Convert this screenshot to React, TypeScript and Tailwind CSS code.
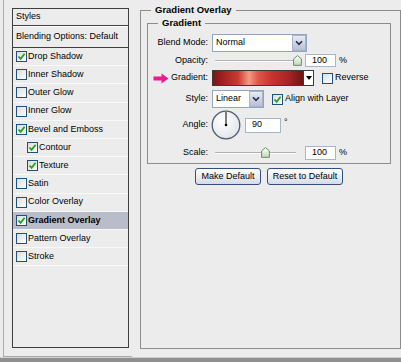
import React from 'react';

type Item = { label: string; checked: boolean; indent?: boolean; active?: boolean };

const items: Item[] = [
  { label: 'Drop Shadow', checked: true },
  { label: 'Inner Shadow', checked: false },
  { label: 'Outer Glow', checked: false },
  { label: 'Inner Glow', checked: false },
  { label: 'Bevel and Emboss', checked: true },
  { label: 'Contour', checked: true, indent: true },
  { label: 'Texture', checked: true, indent: true },
  { label: 'Satin', checked: false },
  { label: 'Color Overlay', checked: false },
  { label: 'Gradient Overlay', checked: true, active: true },
  { label: 'Pattern Overlay', checked: false },
  { label: 'Stroke', checked: false },
];

function Checkbox({ checked }: { checked: boolean }) {
  return (
    <span className="w-[11px] h-[11px] shrink-0 border border-[#1c5180] bg-gradient-to-br from-[#dcdcd6] to-white flex items-center justify-center">
      {checked && (
        <svg width="9" height="9" viewBox="0 0 9 9">
          <path d="M1.5 4.5 L3.6 6.8 L7.6 1.8" fill="none" stroke="#21a121" strokeWidth="1.8" />
        </svg>
      )}
    </span>
  );
}

function DropButton() {
  return (
    <span className="w-[14px] h-full shrink-0 bg-gradient-to-b from-[#e8ebf3] to-[#b7bfd2] border border-[#a9b3c8] flex items-center justify-center">
      <svg width="8" height="6" viewBox="0 0 8 6">
        <path d="M1 1.2 L4 4.3 L7 1.2" fill="none" stroke="#22304a" strokeWidth="1.6" />
      </svg>
    </span>
  );
}

function Thumb() {
  return (
    <svg width="9" height="11" viewBox="0 0 9 11">
      <defs>
        <linearGradient id="th" x1="0" y1="0" x2="0" y2="1">
          <stop offset="0" stopColor="#ffffff" />
          <stop offset="1" stopColor="#b9dcb2" />
        </linearGradient>
      </defs>
      <path d="M4.5 0.6 L8.4 4 L8.4 10.4 L0.6 10.4 L0.6 4 Z" fill="url(#th)" stroke="#6d8a6a" strokeWidth="1" />
    </svg>
  );
}

function Slider({ pos }: { pos: number }) {
  return (
    <div className="relative w-[89px] h-full">
      <div className="absolute left-[3px] right-[5px] top-1/2 -translate-y-1/2 h-[2px] border-t border-[#b0b0b0] bg-white" />
      <div className="absolute top-1/2 -translate-y-[55%]" style={{ left: pos }}>
        <Thumb />
      </div>
    </div>
  );
}

function NumBox({ value, w }: { value: string; w: string }) {
  return (
    <div className={`${w} h-full bg-white border border-[#a5b6c8] flex items-center pl-[6px]`}>
      {value}
    </div>
  );
}

export default function App() {
  return (
    <div className="w-[401px] h-[362px] bg-[#ececec] flex flex-col overflow-hidden text-[9px] text-black font-['Liberation_Sans',Arial,sans-serif]">
      <div className="flex flex-1 min-h-0">
        {/* styles list */}
        <div className="flex flex-col w-[131px] ml-[3px] border-l border-b border-[#ababab] pl-[8px] pt-[8px] pb-[8px]">
          <div className="flex-1 flex flex-col w-[117px] border border-[#3f3f3f]">
            <div className="h-[17px] flex items-center pl-[3px] border-b border-[#3f3f3f]">Styles</div>
            <div className="h-[22px] flex items-center pl-[3px] border-b border-[#3f3f3f] border-t border-t-white">
              Blending Options: Default
            </div>
            {items.map((it) => (
              <div
                key={it.label}
                className={`h-[18.2px] flex items-center gap-[1px] border-b border-[#f8f8f8] ${
                  it.indent ? 'pl-[14px]' : 'pl-[3px]'
                } ${it.active ? 'bg-[#b9bdca] font-bold' : ''}`}
              >
                <Checkbox checked={it.checked} />
                <span>{it.label}</span>
              </div>
            ))}
          </div>
        </div>

        {/* gradient overlay panel */}
        <div className="flex-1 pl-[8px] pt-[4px]">
          <fieldset className="w-[261px] h-[345px] border border-[#8c8c8c] p-0">
            <legend className="ml-[10px] px-[4px] font-bold text-[9.5px] leading-[12px]">Gradient Overlay</legend>
            <div className="pl-[6px] pt-[1px]">
              <fieldset className="w-[244px] h-[147px] border border-[#8c8c8c] p-0">
                <legend className="ml-[10px] px-[4px] font-bold text-[9.5px] leading-[12px]">Gradient</legend>

                <div className="flex items-center h-[18px] mt-[5px]">
                  <span className="w-[61px] text-right pr-[1px]">Blend Mode:</span>
                  <div className="ml-[3px] w-[95px] h-full bg-white border border-[#8fa6c0] flex items-center">
                    <span className="flex-1 pl-[3px]">Normal</span>
                    <DropButton />
                  </div>
                </div>

                <div className="flex items-center h-[13px] mt-[2px]">
                  <span className="w-[61px] text-right pr-[1px]">Opacity:</span>
                  <div className="ml-[3px] h-full flex items-center">
                    <Slider pos={81} />
                    <div className="ml-[4px] h-full">
                      <NumBox value="100" w="w-[31px]" />
                    </div>
                    <span className="ml-[3px] self-start">%</span>
                  </div>
                </div>

                <div className="flex items-center h-[16px] mt-[3px]">
                  <span className="w-[61px] flex items-center justify-end gap-[2px] pr-[1px]">
                    <svg width="16" height="11" viewBox="0 0 16 11">
                      <path d="M0.5 3.5 L8.5 3.5 L8.5 0.5 L15.5 5.5 L8.5 10.5 L8.5 7.5 L0.5 7.5 Z" fill="#f0198f" />
                    </svg>
                    <span>Gradient:</span>
                  </span>
                  <div className="ml-[3px] h-full flex">
                    <div className="w-[92px] h-full border border-[#3a3a3a] bg-[linear-gradient(to_right,#7a1515_0%,#a82525_14%,#c93a33_28%,#f49a84_40%,#df5749_50%,#c83131_66%,#a82424_84%,#6d1414_100%)]" />
                    <div className="w-[10px] h-full bg-white border border-l-0 border-[#3a3a3a] flex items-center justify-center">
                      <svg width="6" height="4" viewBox="0 0 6 4">
                        <path d="M0 0 L6 0 L3 4 Z" fill="#000" />
                      </svg>
                    </div>
                  </div>
                  <span className="ml-[8px]">
                    <Checkbox checked={false} />
                  </span>
                  <span className="ml-[2px]">Reverse</span>
                </div>

                <div className="flex items-center h-[18px] mt-[4px]">
                  <span className="w-[61px] text-right pr-[1px]">Style:</span>
                  <div className="ml-[3px] w-[52px] h-full bg-white border border-[#8fa6c0] flex items-center">
                    <span className="flex-1 pl-[3px]">Linear</span>
                    <DropButton />
                  </div>
                  <span className="ml-[8px]">
                    <Checkbox checked={true} />
                  </span>
                  <span className="ml-[2px]">Align with Layer</span>
                </div>

                <div className="flex items-center h-[30px] mt-[2px]">
                  <span className="w-[61px] text-right pr-[1px]">Angle:</span>
                  <svg className="ml-[2px]" width="30" height="30" viewBox="0 0 30 30">
                    <defs>
                      <radialGradient id="dial" cx="0.4" cy="0.35" r="0.7">
                        <stop offset="0" stopColor="#ffffff" />
                        <stop offset="1" stopColor="#e2e4ea" />
                      </radialGradient>
                    </defs>
                    <circle cx="15" cy="15" r="13.8" fill="url(#dial)" stroke="#4d5a78" strokeWidth="1.3" />
                    <line x1="15" y1="15" x2="15" y2="2" stroke="#000" strokeWidth="1" />
                    <circle cx="15" cy="15" r="1.3" fill="#000" />
                  </svg>
                  <div className="ml-[4px] h-[15px]">
                    <NumBox value="90" w="w-[36px]" />
                  </div>
                  <span className="ml-[3px] self-start mt-[6px]">°</span>
                </div>

                <div className="flex items-center h-[14px] mt-[6px]">
                  <span className="w-[61px] text-right pr-[1px]">Scale:</span>
                  <div className="ml-[3px] h-full flex items-center">
                    <Slider pos={49} />
                    <div className="ml-[4px] h-full">
                      <NumBox value="100" w="w-[31px]" />
                    </div>
                    <span className="ml-[3px] self-start">%</span>
                  </div>
                </div>
              </fieldset>

              <div className="flex gap-[6px] pl-[48px] mt-[4px]">
                <button className="w-[66px] h-[17px] rounded-[3px] border border-[#2f4f7f] bg-gradient-to-b from-white to-[#d6dbe6] text-[9px] leading-none">
                  Make Default
                </button>
                <button className="w-[76px] h-[17px] rounded-[3px] border border-[#2f4f7f] bg-gradient-to-b from-white to-[#d6dbe6] text-[9px] leading-none">
                  Reset to Default
                </button>
              </div>
            </div>
          </fieldset>
        </div>
      </div>
      <div className="h-[5px] border-t border-[#d0d0d0] bg-[#8f8f8f]" />
    </div>
  );
}
